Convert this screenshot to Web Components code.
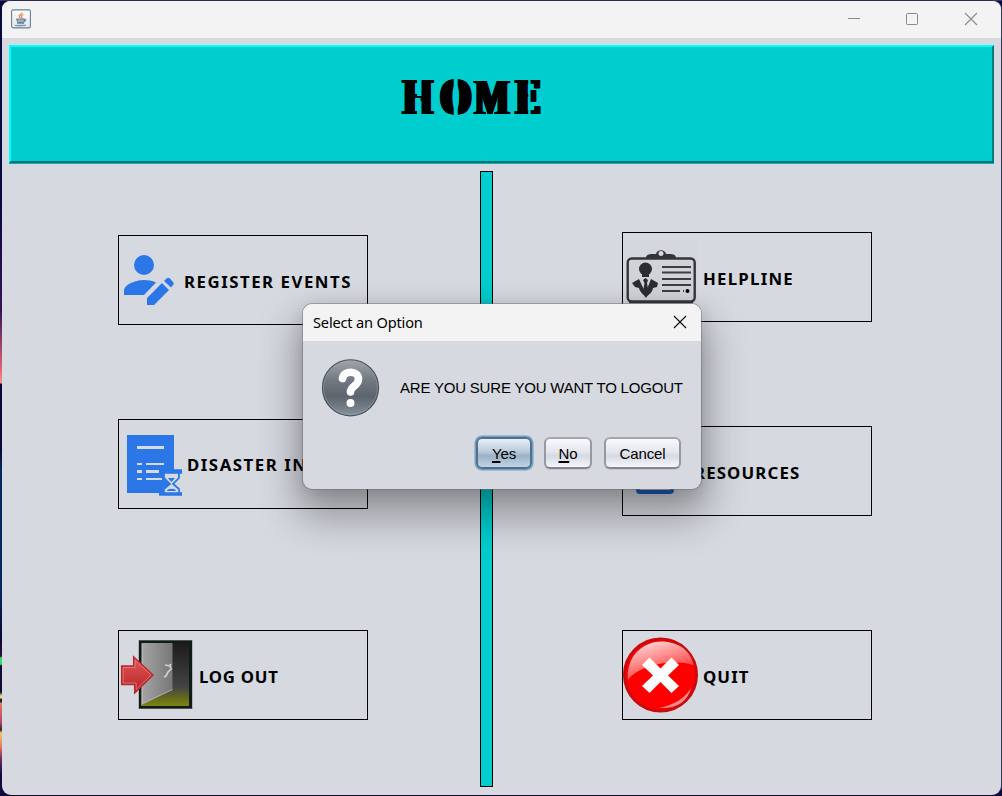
<!DOCTYPE html>
<html lang="en"><head><meta charset="utf-8"><title>Home</title>
<style>html,body{margin:0;width:1002px;height:796px;overflow:hidden;background:#05063b}</style></head>
<body><home-app></home-app>
<script>
const define=(name,html)=>customElements.define(name,class extends HTMLElement{
  constructor(){super();const t=document.createElement('template');t.innerHTML=html;
    this.attachShadow({mode:'open'}).append(t.content.cloneNode(true));}
});

define('title-bar',`<style>
:host{display:flex;height:37px;background:#f3f3f3;align-items:center;box-sizing:border-box;padding:0 13px 0 9px;justify-content:space-between}
svg{display:block;margin-top:-2px}.r{margin-top:-3px}</style>
<svg width="20" height="20" viewBox="0 0 20 20"><defs><linearGradient id="g" x2="0" y2="1"><stop stop-color="#fff"/><stop offset="1" stop-color="#dfe3e8"/></linearGradient></defs>
<rect x=".6" y=".9" width="18.8" height="18" rx="1.5" fill="url(#g)" stroke="#668096" stroke-width="1.1"/>
<path d="M10.7 3.500c.6 2-3.100 2.300-2.400 4 .2.700 1 1 1 1.500M12.500 5.500c-2 .8-2.600 1.600-1.700 2.500.4.500.2 1-.2 1.500" fill="none" stroke="#ee8b3f" stroke-width="1.300"/>
<path d="M5.500 10h8l-.5 3.500H6.700zM13.300 10.300c2.500-.5 2 1.800-.3 2.300M6 14.700h7M4 16.300c3 .8 8 .7 11-.3" fill="#9db1c1" stroke="#5d7c96" stroke-width=".9"/></svg>
<svg class="r" width="140" height="20" viewBox="0 0 140 20" fill="none" stroke="#8b8b8b" stroke-width="1"><path d="M0 10.500h12"/><rect x="58.500" y="5.500" width="11" height="11" rx="1"/><path d="M117 5l12 12M129 5l-12 12" stroke-width="1.100"/></svg>`);

define('page-banner',`<style>
:host{display:flex;box-sizing:border-box;height:118px;margin:7px 7px 0 7px;background:#00cdcd;border:2px solid;border-color:#00ffff #007c7c #006f70 #00ffff;box-shadow:0 1px #00b5b5;padding:24px 0 0 391px}
.logo{position:relative;width:146px;height:54px}
h1{margin:0;width:220px;height:54px;line-height:54px;font-family:"DejaVu Serif",serif;font-weight:bold;font-size:46.500px;white-space:nowrap;transform:scaleX(.72);transform-origin:0 0;color:#000;text-shadow:1px 0,2px 0,2.700px 0,-1px 0,-2px 0,-2.700px 0}
.a{letter-spacing:10.500px}
.b{letter-spacing:6px;text-shadow:1px 0,2px 0,3px 0,3.800px 0,-1px 0,-2px 0,-3px 0,-3.800px 0}
.c{font-family:"Liberation Serif",serif;font-size:51px;line-height:1;letter-spacing:7.500px}
svg{position:absolute;left:0;top:0;display:block}</style>
<div class="logo"><h1><span class="a">H</span><span class="b">O</span><span class="c">M</span>E</h1>
<svg width="146" height="54" viewBox="0 0 146 54" fill="#00cdcd"><path d="M15 8h4.500v17H15zM15 30h4.500v17H15zM51.700 8h4v39h-4zM126.200 8h2.300v39h-2.300z"/></svg></div>`);

define('menu-card',`<style>
:host{display:flex;box-sizing:border-box;width:250px;height:90px;border:1px solid #000;align-items:center;font:bold 16.800px "Noto Sans","Open Sans",sans-serif;color:#000}
::slotted(svg){display:block;flex:none}span{white-space:nowrap;margin-left:var(--gap,5px);letter-spacing:var(--ls,.6px);position:relative;top:var(--dy,1px)}</style>
<slot name="icon"></slot><span><slot></slot></span>`);

define('center-divider',`<style>:host{display:block;box-sizing:border-box;width:13px;height:616px;background:#00cdcd;border:1px solid #000}</style>`);

define('option-button',`<style>
:host{display:block}
button{display:block;box-sizing:border-box;width:100%;height:32px;padding:1px 0 0;border:2px solid;border-color:#a5a7ac #9799a0 #85878c;border-radius:6px;background:linear-gradient(#f8f9fc,#e5e7ee 45%,#d7dae3 60%,#f4f6fc);font:15px "Liberation Sans",sans-serif;letter-spacing:-.1px;color:#000;box-shadow:0 1px 0 #c4c6cd}
:host([focused]) button{border-color:#52708b;background:linear-gradient(#e8eff5,#bacbdb 45%,#9cb2c7 60%,#c2d4e4);box-shadow:0 0 0 1.500px #71a0ca}
::slotted(u){text-underline-offset:2px;text-decoration-thickness:1.500px}</style><button><slot></slot></button>`);

define('option-dialog',`<style>
:host{position:absolute;left:303px;top:304px;width:398px;height:185px;border-radius:9px;overflow:hidden;background:#d6d9e0;box-shadow:0 0 0 1px rgba(110,110,120,.5),0 22px 40px 6px rgba(0,0,0,.32),0 4px 18px rgba(0,0,0,.13);color:#000}
header{display:flex;height:37px;background:#f3f3f3;align-items:center;justify-content:space-between;padding:0 14px 2px 10px;box-sizing:border-box;font:14.600px "Noto Sans","Open Sans",sans-serif}
header span{letter-spacing:-.18px}
svg{display:block}
.msg{display:flex;align-items:center;padding:17px 0 0 18px;gap:20px;font:15px "Liberation Sans",sans-serif;white-space:nowrap}
.msg span{letter-spacing:-.2px;margin:-2px 0 0}
.actions{display:flex;gap:12px;padding:19px 0 0 173px}
</style><header><span>Select an Option</span><svg width="14" height="14" viewBox="0 0 14 14"><path d="M1 1l12 12M13 1L1 13" stroke="#111" stroke-width="1.200"/></svg></header>
<div class="msg"><svg width="59" height="60" viewBox="0 0 59 60"><defs><linearGradient id="q" x2="0" y2="1"><stop stop-color="#a2a6ac"/><stop offset=".35" stop-color="#747a82"/><stop offset=".65" stop-color="#5c646d"/><stop offset="1" stop-color="#83909a"/></linearGradient></defs><circle cx="29.500" cy="29.800" r="28" fill="url(#q)" stroke="#4b525a" stroke-width="1.300"/><circle cx="29.500" cy="29.500" r="27" fill="none" stroke="#b0b4b9" stroke-opacity=".4"/><path d="M21.500 20.500C22.500 12 37.500 12 37.500 21c0 7-8 7-8 13" fill="none" stroke="#fff" stroke-width="7.600" stroke-linecap="round"/><circle cx="29.500" cy="45" r="4" fill="#fff"/></svg><span>ARE YOU SURE YOU WANT TO LOGOUT</span></div>
<div class="actions"><option-button focused style="width:56px"><u>Y</u>es</option-button><option-button style="width:48px"><u>N</u>o</option-button><option-button style="width:77px"><span>Cancel</span></option-button></div>`);

define('home-app',`<style>
:host{display:block;position:relative;width:1002px;height:796px;background:linear-gradient(#39345d 0 1px,#080842 1px 200px,#381158 310px,#e36675 370px,#fa9884 383px,#07083b 384px 450px,#07285c 470px 590px,#07083b 638px,#2a1033 656px,#35dc70 658px 664px,#130a36 666px 692px,#eedb88 696px 698px,#182b28 699px 702px,#ec7668 703px,#b64765 722px,#30262b 730px,#eccb6b 733px,#e86b5f 748px,#71305f 758px,#10093c 775px)}
.window{width:999px;height:795px;border-radius:9px;overflow:hidden;background:#d6d9e0;border-top:1px solid #28294e;margin-left:2px;box-sizing:border-box;box-shadow:1px 0 #34345d}
main{display:grid;grid-template-columns:478px 13px 1fr}
.col{display:flex;flex-direction:column}
.left{padding:72px 0 0 116px}.right{padding:69px 0 0 129px}
center-divider{margin-top:8px}
.left menu-card:nth-child(2){margin-top:94px}.left menu-card:nth-child(3){margin-top:121px}
.right menu-card:nth-child(2){margin-top:104px}.right menu-card:nth-child(3){margin-top:114px}
</style><div class="window"><title-bar></title-bar><page-banner></page-banner><main>
<div class="col left">
<menu-card style="--gap:6px;--ls:1.53px"><svg slot="icon" width="59" height="60" viewBox="0 0 59 60" fill="#2b77e8"><circle cx="25" cy="15" r="10"/><path d="M5 45v-4c0-8 15-11 20-11 4 0 8 .7 12 2.500L25 45zM28 55v-7l15-15 7 7-15 15zM45 31l2.500-2.500c1-1 2.500-1 3.500 0l3 3.500c1 1 1 2 0 3L52 37.500z"/></svg>REGISTER EVENTS</menu-card>
<menu-card style="--gap:5px;--ls:1.53px;--dy:0px"><svg slot="icon" width="63" height="64" viewBox="0 0 63 64"><path d="M8 3h47v35h8v3h-3v5l-5 5 5 6v3h3v3H40v-2H8z" fill="#2b77e8"/><g fill="#d6d9e0"><path d="M18 14h27v3H18zM18 31h5v2h-5zM27 31h18v2H27zM18 38h5v3h-5zM27 38h13v3H27zM18 46h5v2h-5zM27 46h16v2H27zM55 41h5v5l-5 5 5 6v4h3v-20h-8z"/><path d="M45 41h14v5l-5 6 6 5v4H45v-4l6-5-6-6z"/></g><path d="M41 38h22v3H41zM41 61h22v2H41zM45 41v5l6 6-6 5v4M60 41v5l-6 6 6 5v4" fill="none" stroke="#2b77e8" stroke-width="1.700"/><path d="M49 46h7l-3.500 4zM48 59c0-3 9-3 9 0z" fill="#2b77e8"/></svg>DISASTER INFO</menu-card>
<menu-card style="--gap:5px;--ls:.75px"><svg slot="icon" width="75" height="76" viewBox="0 0 75 76"><defs><linearGradient id="d"><stop stop-color="#a5a5a5"/><stop offset="1" stop-color="#777"/></linearGradient><linearGradient id="b" x2="0" y2="1"><stop stop-color="#1c1c1c"/><stop offset=".7" stop-color="#444"/><stop offset=".9" stop-color="#697017"/><stop offset="1" stop-color="#7e8516"/></linearGradient><linearGradient id="red" x2="0" y2="1"><stop stop-color="#e1595a"/><stop offset="1" stop-color="#b62226"/></linearGradient></defs><rect x="19.500" y="3" width="54" height="69" fill="#858a8e"/><rect x="20" y="3.500" width="53" height="68" fill="#111b19"/><rect x="22" y="6" width="48" height="63" fill="url(#b)"/><path d="M22.500 6H53.500V53L22.500 68z" fill="url(#d)"/><path d="M23.500 7v59.500l30-14" fill="none" stroke="#c3c3c3" stroke-opacity=".6"/><path d="M46 28l5 1 1 3-3 3-2 4-2 1M50 29l2-2" fill="none" stroke="#d0d0d0" stroke-width="1.700"/><path d="M2.700 29h12V20L34 38 15.700 56v-8.500h-13z" fill="url(#red)" stroke="#ba292d" stroke-width="1.500"/><path d="M4.200 30.500h12v-7.500L32 38 17.200 52.500V46h-13z" fill="none" stroke="#f08b8a" stroke-opacity=".65"/></svg>LOG OUT</menu-card>
</div><center-divider></center-divider><div class="col right">
<menu-card style="--gap:5px;--ls:1.25px"><svg slot="icon" width="75" height="76" viewBox="0 0 75 76"><rect width="75" height="76" fill="#d4d7dd"/><rect x="4.700" y="19.500" width="67" height="43" rx="4" fill="#d0d3d8" stroke="#35363a" stroke-width="2.400"/><path d="M6 63.500h64" fill="none" stroke="#333438" stroke-width="1.500"/><path d="M23 19c0-4 4-4 10-4 1-5 9-5 10 0 6 0 10 0 10 4z" fill="#333438"/><circle cx="38" cy="14.500" r="2.500" fill="#d6d9e0"/><circle cx="22.500" cy="30" r="6.500" fill="#2c2d30"/><path d="M19 34h7v4h-7zM9 44l7-4 6.500 14L28 40l7 4-1 4-4 1c-1 6-5 6-7 10-2-4-6-5-7-10l-4-1zM20 41l2.500-2 2.500 2-1 3 1 6-2.500 4-2-4 1-6z" fill="#2c2d30"/><path d="M39 28h29M39 33.500h29M39 40h29M39 46h29M39 52h18M60 52h1" stroke="#3c3d41" stroke-width="2.200"/><circle cx="64.500" cy="52" r="2"/></svg>HELPLINE</menu-card>
<menu-card style="--gap:9px;--ls:1.15px"><svg slot="icon" width="62" height="76" viewBox="0 0 62 76" fill="none" stroke="#2060bd" stroke-width="4"><rect x="15" y="12" width="34" height="47" rx="2"/></svg>RESOURCES</menu-card>
<menu-card style="--gap:5px;--ls:1.100px"><svg slot="icon" width="75" height="76" viewBox="0 0 75 76"><defs><linearGradient id="w" x1=".2" x2=".7" y2="1"><stop stop-color="#ffdddd"/><stop offset="1" stop-color="#ff2020"/></linearGradient></defs><circle cx="37.500" cy="38" r="36" fill="#fe0000" stroke="#c90b0e" stroke-width="3"/><path d="M5 43C3 17 22 4 40 4.500c17 1 28 10 30.500 23.500C51 22 17 27 5 43z" fill="url(#w)"/><path d="M36 71c15-3 26-10 32-20-3 13-14 21-32 20z" fill="#ff8787"/><path d="M26.500 20.500l11 11 11-11 7.500 7.500-11 10.500 11 10.500-7.500 7-11-11-11 11-7.500-7 11-10.500-11-10.500z" fill="#fff"/></svg>QUIT</menu-card>
</div></main></div><option-dialog></option-dialog>`);
</script></body></html>
